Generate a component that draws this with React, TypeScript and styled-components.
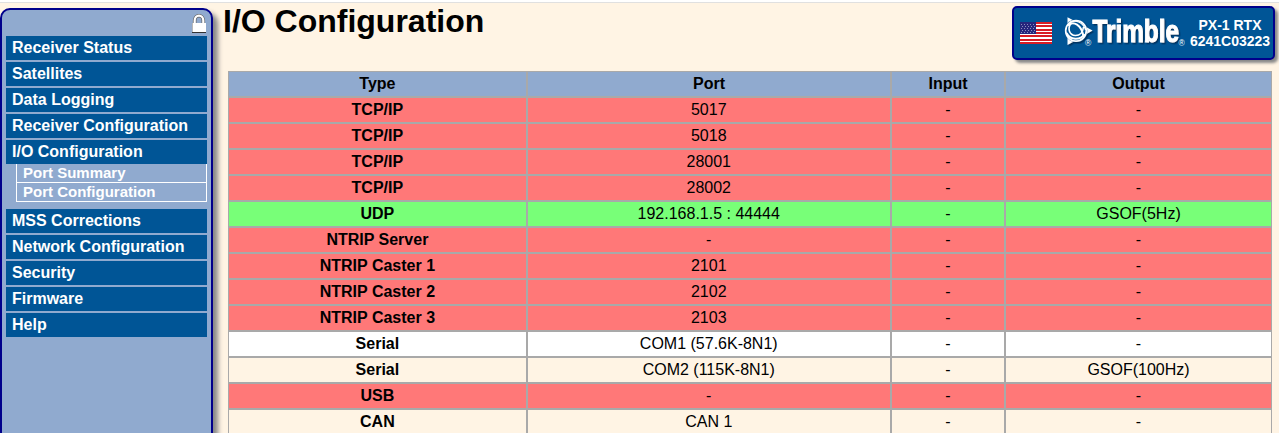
import React from "react";
import styled, { createGlobalStyle } from "styled-components";

const GlobalStyle = createGlobalStyle`
  * { box-sizing: border-box; }
  html, body { margin: 0; height: 100%; overflow: hidden; }
  body {
    background: #fff4e4;
    color: #000;
    font-family: "Liberation Sans", Arial, sans-serif;
    font-size: 16px;
  }
`;

const Page = styled.div`
  height: 433px;
  overflow: hidden;
  border-top: 2px solid #fff;
`;

const Body = styled.div`
  display: flex;
  align-items: flex-start;
  height: 431px;
  border-top: 1px solid #e0e0e0;
`;

const Sidebar = styled.nav`
  flex: none;
  width: 213px;
  height: 460px;
  margin-top: 5px;
  padding: 2px 4px;
  background: #90aacf;
  border: 2px solid #00008b;
  border-radius: 10px;
  box-shadow: 5px 5px 5px #888;
`;

const LockRow = styled.div`
  display: flex;
  justify-content: flex-end;
  height: 24px;
  padding: 2px 0 0;
`;

const MenuItem = styled.div`
  height: 24px;
  margin-bottom: 2px;
  padding-left: 6px;
  background: #005596;
  color: #fff;
  font-weight: bold;
  line-height: 23px;
`;

const SubMenu = styled.div`
  margin: -2px 0 7px 10px;
  border: solid #fff;
  border-width: 0 1px;
`;

const SubItem = styled.div`
  height: 19px;
  padding-left: 6px;
  border-bottom: 1px solid #fff;
  color: #fff;
  font-size: 15px;
  font-weight: bold;
  line-height: 18px;
`;

const Main = styled.main`
  flex: 1;
  padding: 0 7px 0 10px;
`;

const Header = styled.header`
  display: flex;
  justify-content: space-between;
  height: 68px;
  margin-right: -3px;
  padding-top: 3px;
`;

const Title = styled.h1`
  margin: 0;
  font-size: 32px;
  line-height: 31px;
`;

const Badge = styled.div`
  display: flex;
  align-items: center;
  width: 263px;
  height: 54px;
  padding-left: 6px;
  background: #005596;
  border: 2px solid #00008b;
  border-radius: 5px;
  box-shadow: 3px 3px 3px #888;
  color: #fff;
`;

const Logo = styled.div`
  flex: none;
  display: flex;
  width: 122px;
  margin-left: 11px;
`;

const Device = styled.div`
  flex: none;
  width: 84px;
  margin-left: 3px;
  font-size: 14px;
  font-weight: bold;
  line-height: 16px;
  text-align: center;
  white-space: nowrap;
`;

const Table = styled.table`
  width: 1044px;
  margin-left: 5px;
  table-layout: fixed;
  border-collapse: separate;
  border-spacing: 0;
`;

const tones = {
  head: "#90aacf",
  off: "#ff7878",
  on: "#78ff78",
  white: "#fff",
  cream: "#fff4e4",
};

const Row = styled.tr<{ $tone: keyof typeof tones }>`
  height: 26px;
  background: ${(p) => tones[p.$tone]};
  th, td {
    height: 26px;
    padding: 0;
    border: 1px solid #a9a9a9;
    line-height: 24px;
    text-align: center;
  }
  th:first-child { padding-right: 0.25px; }
  td:nth-child(2) { padding-right: 0.5px; }
`;

const menuTop = ["Receiver Status", "Satellites", "Data Logging", "Receiver Configuration", "I/O Configuration"];
const menuBottom = ["MSS Corrections", "Network Configuration", "Security", "Firmware", "Help"];

const rows: [keyof typeof tones, string, string, string, string][] = [
  ["off", "TCP/IP", "5017", "-", "-"],
  ["off", "TCP/IP", "5018", "-", "-"],
  ["off", "TCP/IP", "28001", "-", "-"],
  ["off", "TCP/IP", "28002", "-", "-"],
  ["on", "UDP", "192.168.1.5 : 44444", "-", "GSOF(5Hz)"],
  ["off", "NTRIP Server", "-", "-", "-"],
  ["off", "NTRIP Caster 1", "2101", "-", "-"],
  ["off", "NTRIP Caster 2", "2102", "-", "-"],
  ["off", "NTRIP Caster 3", "2103", "-", "-"],
  ["white", "Serial", "COM1 (57.6K-8N1)", "-", "-"],
  ["cream", "Serial", "COM2 (115K-8N1)", "-", "GSOF(100Hz)"],
  ["off", "USB", "-", "-", "-"],
  ["cream", "CAN", "CAN 1", "-", "-"],
];

const LockIcon = () => (
  <svg width="16" height="20" viewBox="0 0 16 20">
    <path d="M3.700 9V6.500a4.300 4.800 0 0 1 8.600 0V9" fill="none" stroke="#666" strokeWidth="3.600" />
    <path d="M3.700 9.500V6.500a4.300 4.800 0 0 1 8.600 0v3" fill="none" stroke="#fff" strokeWidth="2.200" />
    <path d="M1 9h14v9H1z" fill="#fff" />
    <path d="M1 18.500h14" stroke="#333" />
    <path d="M1.500 9v9" stroke="#999" strokeWidth=".7" />
  </svg>
);

const Flag = () => (
  <svg width="32" height="22" viewBox="0 0 32 22" shapeRendering="crispEdges">
    <rect width="32" height="22" fill="#fff" />
    {[0, 3, 7, 10, 13, 17, 20].map((y) => (
      <rect key={y} y={y} width="32" height={y === 0 || y === 20 ? 2 : 1.6} fill="#d81c24" />
    ))}
    <rect width="16" height="12" fill="#26267d" />
    {[1, 3, 5, 7, 9].map((y, r) =>
      Array.from({ length: 5 }, (_, i) => (
        <rect key={`${y}-${i}`} x={1 + i * 3 + (r % 2)} y={y + 0.5} width="1" height="1" fill="#8c8cbb" />
      )),
    )}
  </svg>
);

const TrimbleLogo = () => (
  <svg width="122" height="36" viewBox="0 0 122 36" fontFamily="'Liberation Sans', Arial, sans-serif">
    <defs>
      <filter id="drop" x="-10%" y="-10%" width="125%" height="130%">
        <feDropShadow dx="1.5" dy="1.500" stdDeviation="0.7" floodColor="#002c55" floodOpacity="0.8" />
      </filter>
    </defs>
    <g filter="url(#drop)">
      <path d="M4.500 2.300L29.500 15.500L4.500 30Z" fill="#fff" />
      <circle cx="13" cy="15.800" r="11.300" fill="#005596" />
      <circle cx="13" cy="15.800" r="10.300" fill="#005596" stroke="#fff" strokeWidth="1.700" />
      <g fill="none" stroke="#fff">
        <path d="M4.500 10.500C10 5.500 19 9 20.500 22.500" strokeWidth="2" />
        <path d="M7 7.500C13 4 20.500 8 22.500 15" strokeWidth="1.200" />
        <path d="M8.500 8C4 13 6 20 12.500 20.500C17 20.500 20 17 20.500 12" strokeWidth="1.600" />
        <path d="M3.500 18C7 25 17 26 21.500 19" strokeWidth="2" />
      </g>
    </g>
    <g filter="url(#drop)">
      <text x="29.500" y="27.300" fontSize="31" fontWeight="bold" fill="#fff" stroke="#fff" strokeWidth="1.100" textLength="86.500" lengthAdjust="spacingAndGlyphs">Trimble</text>
    </g>
    <g fill="#fff" fontSize="8.500">
      <text x="22" y="31.300">®</text>
      <text x="115.500" y="31.300">®</text>
    </g>
  </svg>
);

export default function App() {
  return (
    <Page>
      <GlobalStyle />
      <Body>
        <Sidebar>
          <LockRow><LockIcon /></LockRow>
          {menuTop.map((m) => <MenuItem key={m}>{m}</MenuItem>)}
          <SubMenu>
            <SubItem>Port Summary</SubItem>
            <SubItem>Port Configuration</SubItem>
          </SubMenu>
          {menuBottom.map((m) => <MenuItem key={m}>{m}</MenuItem>)}
        </Sidebar>
        <Main>
          <Header>
            <Title>I/O Configuration</Title>
            <Badge>
              <Flag />
              <Logo><TrimbleLogo /></Logo>
              <Device>PX-1 RTX<br />6241C03223</Device>
            </Badge>
          </Header>
          <Table>
            <colgroup>
              <col style={{ width: 299 }} />
              <col style={{ width: 364 }} />
              <col style={{ width: 114 }} />
              <col style={{ width: 267 }} />
            </colgroup>
            <tbody>
              <Row $tone="head"><th>Type</th><th>Port</th><th>Input</th><th>Output</th></Row>
              {rows.map(([tone, type, port, input, output], i) => (
                <Row key={i} $tone={tone}>
                  <th>{type}</th><td>{port}</td><td>{input}</td><td>{output}</td>
                </Row>
              ))}
            </tbody>
          </Table>
        </Main>
      </Body>
    </Page>
  );
}
